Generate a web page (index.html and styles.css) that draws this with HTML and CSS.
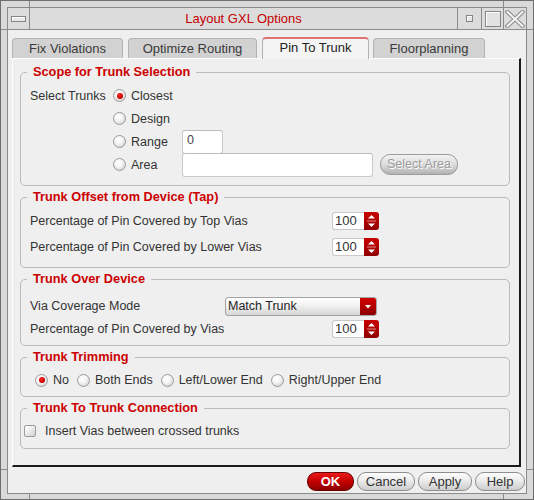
FILE: index.html
```html
<!DOCTYPE html>
<html>
<head>
<meta charset="utf-8">
<title>Layout GXL Options</title>
<link rel="stylesheet" href="styles.css">
</head>
<body>
<div class="window">
  <span class="tick tick-v tick-top1"></span>
  <span class="tick tick-v tick-top2"></span>
  <span class="tick tick-v tick-bot1"></span>
  <span class="tick tick-v tick-bot2"></span>
  <span class="tick tick-h tick-left1"></span>
  <span class="tick tick-h tick-left2"></span>
  <span class="tick tick-h tick-right1"></span>
  <span class="tick tick-h tick-right2"></span>
  <div class="frame">
    <div class="titlebar">
      <div class="tb-btn tb-menu"><span class="menu-bar"></span></div>
      <div class="tb-title">Layout GXL Options</div>
      <div class="tb-btn tb-min"><span class="min-box"></span></div>
      <div class="tb-btn tb-max"><span class="max-box"></span></div>
      <div class="tb-btn tb-close">
        <svg width="20" height="18" viewBox="0 0 20 18">
          <path d="M2.5 2 L17.5 16 M17.5 2 L2.5 16" stroke="#8a8a8a" stroke-width="4.2" stroke-linecap="square"/>
          <path d="M2.5 2 L17.5 16 M17.5 2 L2.5 16" stroke="#f2f2f2" stroke-width="2.2" stroke-linecap="square"/>
        </svg>
      </div>
    </div>
    <div class="client">
      <div class="tabs">
        <div class="tab tab-fix">Fix Violations</div>
        <div class="tab tab-opt">Optimize Routing</div>
        <div class="tab tab-pin active">Pin To Trunk</div>
        <div class="tab tab-floor">Floorplanning</div>
      </div>
      <div class="panel">
        <fieldset class="group">
          <legend>Scope for Trunk Selection</legend>
          <div class="scope">
            <span class="lbl">Select Trunks</span>
            <span class="opt"><span class="radio on"></span>Closest</span>
            <span></span><span></span>
            <span></span>
            <span class="opt"><span class="radio"></span>Design</span>
            <span></span><span></span>
            <span></span>
            <span class="opt"><span class="radio"></span>Range</span>
            <span class="field field-range">0</span>
            <span></span>
            <span></span>
            <span class="opt"><span class="radio"></span>Area</span>
            <span class="field field-area"></span>
            <span class="pill-btn disabled">Select Area</span>
          </div>
        </fieldset>

        <fieldset class="group">
          <legend>Trunk Offset from Device (Tap)</legend>
          <div class="rows rows-tap">
            <div class="row row-26">
              <span class="lbl lbl-wide">Percentage of Pin Covered by Top Vias</span>
              <span class="spin"><span class="spin-val">100</span><span class="spin-btn"><svg width="15" height="18" viewBox="0 0 15 18"><path d="M4 6.5 L7.5 3 L11 6.5 Z" fill="#fff"/><path d="M3 9 H12" stroke="#d98a8a" stroke-width="1"/><path d="M4 11.5 L7.5 15 L11 11.5 Z" fill="#fff"/></svg></span></span>
            </div>
            <div class="row row-26">
              <span class="lbl lbl-wide">Percentage of Pin Covered by Lower Vias</span>
              <span class="spin"><span class="spin-val">100</span><span class="spin-btn"><svg width="15" height="18" viewBox="0 0 15 18"><path d="M4 6.5 L7.5 3 L11 6.5 Z" fill="#fff"/><path d="M3 9 H12" stroke="#d98a8a" stroke-width="1"/><path d="M4 11.5 L7.5 15 L11 11.5 Z" fill="#fff"/></svg></span></span>
            </div>
          </div>
        </fieldset>

        <fieldset class="group">
          <legend>Trunk Over Device</legend>
          <div class="rows rows-over">
            <div class="row row-24">
              <span class="lbl lbl-mode">Via Coverage Mode</span>
              <span class="combo"><span class="combo-val">Match Trunk</span><span class="combo-btn"><svg width="16" height="19" viewBox="0 0 16 19"><path d="M5 8 H11 L8 11.5 Z" fill="#fff"/></svg></span></span>
            </div>
            <div class="row row-21">
              <span class="lbl lbl-wide">Percentage of Pin Covered by Vias</span>
              <span class="spin"><span class="spin-val">100</span><span class="spin-btn"><svg width="15" height="18" viewBox="0 0 15 18"><path d="M4 6.5 L7.5 3 L11 6.5 Z" fill="#fff"/><path d="M3 9 H12" stroke="#d98a8a" stroke-width="1"/><path d="M4 11.5 L7.5 15 L11 11.5 Z" fill="#fff"/></svg></span></span>
            </div>
          </div>
        </fieldset>

        <fieldset class="group">
          <legend>Trunk Trimming</legend>
          <div class="rows rows-trim">
            <div class="row row-20 opts">
              <span class="opt"><span class="radio on"></span>No</span>
              <span class="opt"><span class="radio"></span>Both Ends</span>
              <span class="opt"><span class="radio"></span>Left/Lower End</span>
              <span class="opt"><span class="radio"></span>Right/Upper End</span>
            </div>
          </div>
        </fieldset>

        <fieldset class="group">
          <legend>Trunk To Trunk Connection</legend>
          <div class="rows rows-conn">
            <div class="row row-20">
              <span class="check"></span>
              <span class="check-lbl">Insert Vias between crossed trunks</span>
            </div>
          </div>
        </fieldset>
      </div>
      <div class="buttons">
        <span class="btn btn-ok">OK</span>
        <span class="btn btn-cancel">Cancel</span>
        <span class="btn btn-apply">Apply</span>
        <span class="btn btn-help">Help</span>
      </div>
    </div>
  </div>
</div>
</body>
</html>
```
FILE: styles.css
```css
* { box-sizing: border-box; }
html, body { margin: 0; padding: 0; }
body {
  width: 534px;
  height: 500px;
  font-family: "Liberation Sans", Arial, sans-serif;
  font-size: 12.5px;
  color: #333;
  background: #d8d8d8;
}

/* window frame */
.window {
  position: relative;
  width: 534px;
  height: 500px;
  border: 1px solid #6e6e6e;
  padding: 6px 6px 5px 6px;
  background: #d9d9d9;
}
.tick { position: absolute; background: #8b8b8b; }
.tick-v { width: 1px; height: 6px; }
.tick-h { width: 6px; height: 1px; }
.tick-top1 { left: 28px; top: 0; }
.tick-top2 { left: 502px; top: 0; }
.tick-bot1 { left: 28px; top: 493px; height: 5px; }
.tick-bot2 { left: 502px; top: 493px; height: 5px; }
.tick-left1 { left: 0; top: 28px; }
.tick-left2 { left: 0; top: 468px; }
.tick-right1 { left: 526px; top: 28px; }
.tick-right2 { left: 526px; top: 468px; }

.frame {
  height: 100%;
  border: 1px solid #8b8b8b;
  display: flex;
  flex-direction: column;
  background: #efefef;
}

/* title bar */
.titlebar {
  display: flex;
  height: 22px;
  flex: none;
  border-bottom: 1px solid #8b8b8b;
  background: #dcdcdc;
}
.tb-btn {
  display: flex;
  align-items: center;
  justify-content: center;
}
.tb-menu { width: 22px; border-right: 1px solid #8b8b8b; }
.menu-bar {
  width: 15px;
  height: 6px;
  border: 1px solid #858585;
  background: #eaeaea;
  box-shadow: inset 1px 1px 0 #fff;
  margin-left: -1px;
}
.tb-title {
  flex: 1;
  text-align: center;
  color: #c40000;
  font-size: 13px;
  line-height: 21px;
}
.tb-min { width: 24px; border-left: 1px solid #8b8b8b; }
.min-box {
  width: 7px;
  height: 7px;
  border: 1px solid #858585;
  background: #e6e6e6;
  box-shadow: inset 1px 1px 0 #fff;
  margin-top: -1px;
}
.tb-max { width: 22px; border-left: 1px solid #8b8b8b; }
.max-box {
  width: 16px;
  height: 16px;
  border: 1px solid #858585;
  background: #e2e2e2;
  box-shadow: inset 1px 1px 0 #fff;
}
.tb-close { width: 23px; border-left: 1px solid #8b8b8b; }

/* client area */
.client {
  flex: 1;
  display: flex;
  flex-direction: column;
  padding: 7px 0 2px 0;
  background: #efefef;
}

.tabs {
  display: flex;
  align-items: flex-end;
  height: 21px;
  flex: none;
  padding-left: 4px;
}
.tab {
  height: 20px;
  margin-right: 5px;
  border: 1px solid #b3b3b3;
  border-bottom: none;
  border-radius: 4px 4px 0 0;
  background: #d2d2d2;
  text-align: center;
  font-size: 13px;
  line-height: 20px;
  color: #3a3a3a;
}
.tab-fix { width: 111px; }
.tab-opt { width: 129px; }
.tab-pin { width: 107px; margin-right: 4px; }
.tab-floor { width: 112px; }
.tab.active {
  position: relative;
  z-index: 1;
  height: 22px;
  margin-bottom: -1px;
  border-top: 2px solid #e07272;
  background: #f4f4f4;
  line-height: 18px;
  color: #222;
}

.panel {
  flex: 1;
  margin: 0 5px 0 4px;
  border-left: 1px solid #fdfdfd;
  border-top: 1px solid #fdfdfd;
  border-right: 2px solid #1b1b1b;
  border-bottom: 2px solid #1b1b1b;
  padding: 6px 9px 0 7px;
  background: #efefef;
}

/* group boxes */
.group {
  margin: 0 0 4px 0;
  padding: 0;
  min-width: 0;
  border: 1px solid #bababa;
  border-radius: 5px;
}
.group legend {
  margin-left: 6px;
  padding: 0 6px;
  font-weight: bold;
  font-size: 12.75px;
  line-height: 14px;
  color: #cc0000;
}

.lbl { white-space: nowrap; }

.scope {
  display: grid;
  grid-template-columns: 83px 69px 191px 1fr;
  grid-auto-rows: 23px;
  align-items: center;
  justify-items: start;
  padding: 5px 0 9px 9px;
}
.opt {
  display: flex;
  align-items: center;
  gap: 5px;
  white-space: nowrap;
}
.radio {
  flex: none;
  width: 13px;
  height: 13px;
  border-radius: 50%;
  border: 1px solid #9a9a9a;
  background: radial-gradient(circle at 40% 35%, #ffffff 0, #f7f7f7 35%, #c9c9c9 100%);
  display: flex;
  align-items: center;
  justify-content: center;
}
.radio.on::after {
  content: "";
  width: 6px;
  height: 6px;
  border-radius: 50%;
  background: radial-gradient(circle at 40% 35%, #ff2a2a 0, #d00000 60%, #900000 100%);
}

.field {
  height: 24px;
  background: #fff;
  border: 1px solid #c9c9c9;
  border-top-color: #bcbcbc;
  border-radius: 3px;
  padding: 1px 4px;
  line-height: 16px;
  font-size: 12.5px;
  color: #444;
}
.field-range { width: 41px; }
.field-area { width: 191px; }

.pill-btn {
  display: block;
  width: 78px;
  height: 21px;
  margin-left: 7px;
  border: 1px solid #9c9c9c;
  border-radius: 10px;
  background: linear-gradient(#f2f2f2, #dcdcdc 50%, #b3b3b3);
  text-align: center;
  line-height: 19px;
  font-size: 12.5px;
  white-space: nowrap;
}
.pill-btn.disabled {
  color: #9b9b9b;
  text-shadow: 1px 1px 0 #fff;
}

.rows { padding-left: 9px; }
.rows-tap { padding-top: 4px; padding-bottom: 7px; }
.rows-over { padding-top: 8px; padding-bottom: 6px; }
.rows-trim { padding: 6px 0 6px 14px; }
.rows-conn { padding: 6px 0 7px 3px; }

.row { display: flex; align-items: center; }
.row-26 { height: 26px; }
.row-24 { height: 24px; }
.row-21 { height: 21px; }
.row-20 { height: 20px; }
.lbl-wide { width: 302px; }
.lbl-mode { width: 195px; }
.opts { gap: 8px; }

.spin {
  display: flex;
  width: 47px;
  height: 18px;
}
.spin-val {
  flex: 1;
  background: #fff;
  border: 1px solid #c9c9c9;
  border-right: none;
  border-radius: 3px 0 0 3px;
  padding-left: 2px;
  font-size: 13px;
  line-height: 16px;
  color: #333;
}
.spin-btn {
  width: 15px;
  height: 18px;
  border-radius: 0 3px 3px 0;
  background: linear-gradient(#c80000, #b00000 50%, #8e0000);
  display: block;
}
.spin-btn svg { display: block; }

.combo {
  display: flex;
  width: 152px;
  height: 19px;
  border: 1px solid #a3a3a3;
  border-radius: 3px;
  overflow: hidden;
  background: linear-gradient(#ffffff, #f1f1f1 45%, #d6d6d6);
}
.combo-val {
  flex: 1;
  padding-left: 2px;
  font-size: 12.5px;
  line-height: 16px;
  color: #262626;
}
.combo-btn {
  width: 16px;
  background: linear-gradient(#d00000, #b40000 50%, #8a0000);
}
.combo-btn svg { display: block; margin-top: -1px; }

.check {
  width: 12px;
  height: 12px;
  border: 1px solid #9c9c9c;
  border-radius: 2px;
  background: linear-gradient(135deg, #ffffff, #f0f0f0 40%, #cfcfcf);
}
.check-lbl { margin-left: 9px; white-space: nowrap; }

/* dialog buttons */
.buttons {
  display: flex;
  justify-content: flex-end;
  gap: 3px;
  margin-top: 5px;
  padding-right: 1px;
  height: 19px;
  flex: none;
}
.btn {
  display: block;
  height: 19px;
  border: 1px solid #8e8e8e;
  border-radius: 9px;
  background: linear-gradient(#fdfdfd, #ebebeb 45%, #cdcdcd);
  text-align: center;
  font-size: 13px;
  line-height: 17px;
  color: #333;
}
.btn-ok {
  width: 47px;
  border-color: #6a0000;
  background: linear-gradient(#ea1a1a, #c40000 50%, #8c0000);
  color: #fff;
  font-weight: bold;
}
.btn-cancel { width: 58px; }
.btn-apply { width: 54px; }
.btn-help { width: 50px; }
```
